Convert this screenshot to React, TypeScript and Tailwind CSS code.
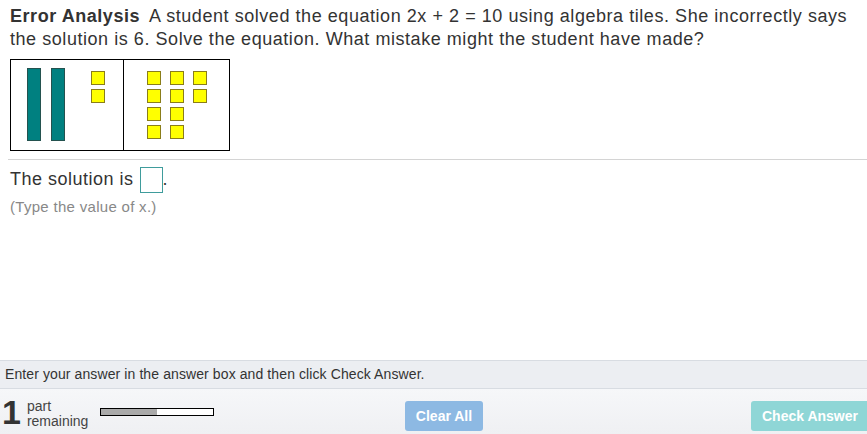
import React from "react";

function TilesPicture() {
  const left = [
    [91, 71],
    [91, 89],
  ];
  const right = [
    [147, 71], [170, 71], [193, 71],
    [147, 89], [170, 89], [193, 89],
    [147, 107], [170, 107],
    [147, 125], [170, 125],
  ];
  return (
    <svg width="221" height="93" viewBox="10 59 221 93" className="block">
      <rect x="10.5" y="59.5" width="219" height="91" fill="#fff" stroke="#000" strokeWidth="1" />
      <line x1="123.5" y1="59.5" x2="123.5" y2="150.5" stroke="#000" strokeWidth="1" />
      <rect x="27.5" y="68.5" width="13" height="72" fill="#008080" stroke="#24524f" />
      <rect x="51.5" y="68.5" width="13" height="72" fill="#008080" stroke="#24524f" />
      {[...left, ...right].map(([x, y], i) => (
        <rect key={i} x={x + 0.5} y={y + 0.5} width="13" height="13" fill="#ffff00" stroke="#8a7d1a" />
      ))}
    </svg>
  );
}

export default function App() {
  return (
    <div className="flex flex-col w-[867px] h-[434px] overflow-hidden bg-white text-[#333] font-['Liberation_Sans',Arial,sans-serif]">
      <div className="flex-1">
        <p className="px-[10px] pt-[5px] text-[18px] leading-[23px] tracking-[0.55px]">
          <b className="mr-[9px]">Error Analysis</b>
          <span>
            A student solved the equation 2x + 2 = 10 using algebra tiles. She incorrectly says the solution is 6. Solve the equation. What mistake might the student have made?
          </span>
        </p>
        <div className="pl-[10px] pt-[8px]">
          <TilesPicture />
        </div>
        <div className="ml-[8px] mt-[7px] border-t border-[#d4d4d4]" />
        <div className="pl-[10px] pt-[6px] flex items-center text-[18px] tracking-[0.5px]">
          <span>The solution is</span>
          <span className="ml-[6px] inline-block w-[23px] h-[26px] border border-[#3f9c9c]" />
          <span>.</span>
        </div>
        <div className="pl-[10px] pt-[5px] text-[15px] leading-[17px] text-[#888] tracking-[0.3px]">(Type the value of x.)</div>
      </div>
      <div className="h-[29px] flex items-center px-[5px] bg-[#eceef2] border-t border-b border-[#d8dce2] text-[14px] tracking-[0.1px] text-[#333]">
        Enter your answer in the answer box and then click Check Answer.
      </div>
      <div className="h-[45px] flex items-end pb-[3px] bg-gradient-to-b from-[#f6f7f9] to-[#eff0f3]">
        <div className="flex items-center self-center pl-[2px] w-[405px] mt-[4px]">
          <span className="text-[34px] font-bold leading-none text-[#333]">1</span>
          <div className="ml-[6px] text-[14px] leading-[15px] text-[#444] mt-[4px]">
            <div>part</div>
            <div>remaining</div>
          </div>
          <div className="ml-[12px] w-[114px] h-[8px] border border-black bg-white">
            <div className="h-full w-[50%] bg-[#aaa]" />
          </div>
        </div>
        <button className="w-[78px] h-[30px] rounded-[3px] bg-[#8db9e3] text-white text-[14px] font-bold">
          Clear All
        </button>
        <button className="ml-auto w-[116px] h-[30px] rounded-l-[3px] bg-[#8fd6d6] text-white text-[14px] font-bold text-left pl-[11px]">
          Check Answer
        </button>
      </div>
    </div>
  );
}
